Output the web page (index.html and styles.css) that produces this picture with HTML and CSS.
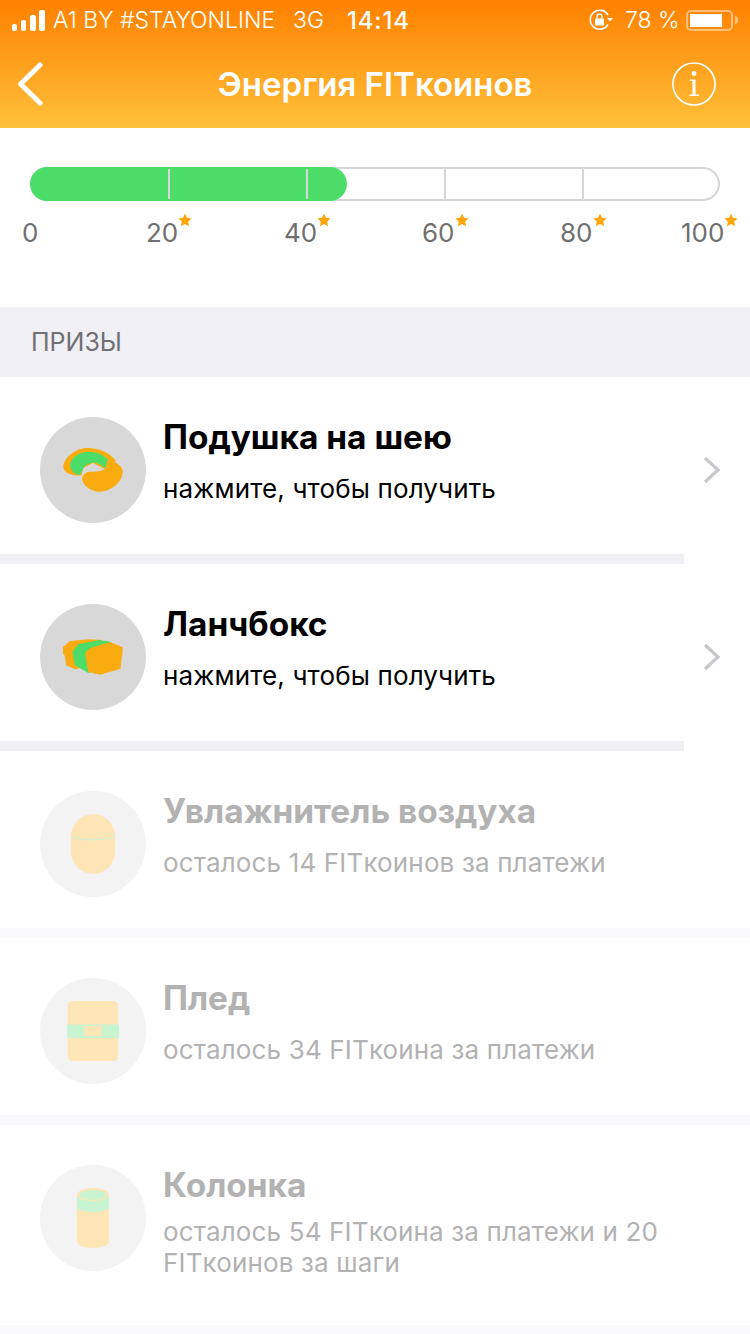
FILE: index.html
```html
<!DOCTYPE html>
<html lang="ru">
<head>
  <meta charset="UTF-8" />
  <meta name="viewport" content="width=device-width, initial-scale=1.0" />
  <title>Энергия FITкоинов</title>
  <link rel="stylesheet" href="styles.css">
</head>
<body>
  <header class="top">
    <div class="status">
      <svg class="signal" width="34" height="21" viewBox="0 0 34 21">
        <rect x="0" y="14" width="5" height="7" rx="2"/>
        <rect x="9" y="10" width="5" height="11" rx="2"/>
        <rect x="18" y="5" width="6" height="16" rx="2"/>
        <rect x="27" y="0" width="6" height="21" rx="2"/>
      </svg>
      <span class="carrier">A1 BY #STAYONLINE</span>
      <span class="net">3G</span>
      <span class="time">14:14</span>
      <span class="status-right">
        <svg class="lock" width="24" height="22" viewBox="0 0 24 22">
          <path d="M19 15.5A9.5 9.5 0 1 1 19 6" fill="none" stroke="#fff" stroke-width="1.6"/>
          <path d="M18 9h6l-3 3.5z" fill="#fff"/>
          <rect x="6" y="9.5" width="9" height="7" rx="1" fill="#fff"/>
          <path d="M8 9.5V7.5a2.5 2.5 0 0 1 5 0v2" fill="none" stroke="#fff" stroke-width="1.4"/>
        </svg>
        <span class="percent">78 %</span>
        <span class="battery"><span class="battery-level"></span></span>
        <span class="battery-nub"></span>
      </span>
    </div>
    <div class="nav">
      <svg class="back" width="28" height="44" viewBox="0 0 28 44">
        <path d="M24 3L4.5 22L24 41" fill="none" stroke="#fff" stroke-width="5" stroke-linecap="round" stroke-linejoin="round"/>
      </svg>
      <h1>Энергия FITкоинов</h1>
      <svg class="info" width="44" height="44" viewBox="0 0 44 44">
        <circle cx="22" cy="22" r="21" fill="none" stroke="#fff" stroke-width="1.7"/>
        <circle cx="22" cy="11.5" r="2.4" fill="#fff"/>
        <path d="M18 17.5h5.5v15H27v1.5H17.5v-1.5h3V19H18z" fill="#fff"/>
      </svg>
    </div>
  </header>

  <section class="progress">
    <div class="track">
      <div class="fill" style="width: 317px"></div>
      <div class="cell"></div>
      <div class="cell"></div>
      <div class="cell"></div>
      <div class="cell"></div>
      <div class="cell"></div>
    </div>
    <div class="scale">
      <span class="mark">0</span>
      <span class="mark">20<svg class="star" width="14" height="14" viewBox="0 0 24 24"><path d="M12 1l3.4 7.3 7.9 1-5.8 5.4 1.5 7.9-7-3.9-7 3.9 1.5-7.9L.7 9.3l7.9-1z"/></svg></span>
      <span class="mark">40<svg class="star" width="14" height="14" viewBox="0 0 24 24"><path d="M12 1l3.4 7.3 7.9 1-5.8 5.4 1.5 7.9-7-3.9-7 3.9 1.5-7.9L.7 9.3l7.9-1z"/></svg></span>
      <span class="mark">60<svg class="star" width="14" height="14" viewBox="0 0 24 24"><path d="M12 1l3.4 7.3 7.9 1-5.8 5.4 1.5 7.9-7-3.9-7 3.9 1.5-7.9L.7 9.3l7.9-1z"/></svg></span>
      <span class="mark">80<svg class="star" width="14" height="14" viewBox="0 0 24 24"><path d="M12 1l3.4 7.3 7.9 1-5.8 5.4 1.5 7.9-7-3.9-7 3.9 1.5-7.9L.7 9.3l7.9-1z"/></svg></span>
      <span class="mark">100<svg class="star" width="14" height="14" viewBox="0 0 24 24"><path d="M12 1l3.4 7.3 7.9 1-5.8 5.4 1.5 7.9-7-3.9-7 3.9 1.5-7.9L.7 9.3l7.9-1z"/></svg></span>
    </div>
  </section>

  <div class="section-title">ПРИЗЫ</div>

  <div class="prize">
    <svg class="pic" width="106" height="106" viewBox="0 0 106 106">
      <circle cx="53" cy="53" r="53" fill="#d8d8d8"/>
      <path d="M23.3 50C24 40 36 31 47 31C60 31 70 36 76 44L65 52L53 46L43 51L41.7 58C36 60 24 57 23.3 50Z" fill="#faab10"/>
      <path d="M30 48C31 40 40 34.7 48.3 34.7C57 34.7 64 38 68.5 43L65 51.5C61 47 57 45.5 53.3 45.7C48 46 44 49 43 52L40 58C35 57.5 30 53 30 48Z" fill="#4cdd69"/>
      <path d="M68 42C78 46 83 50 82.7 55C82 66 70 74.7 60 74.7C50 74.7 43 68 42 62C42 58 46 54.7 50 54.7C56 55 62 54 65 52Z" fill="#faab10"/>
    </svg>
    <div class="prize-text">
      <div class="prize-name">Подушка на шею</div>
      <div class="prize-note">нажмите, чтобы получить</div>
    </div>
    <svg class="more" width="18" height="28" viewBox="0 0 18 28"><path d="M2 2l13 12L2 26" fill="none" stroke="#c7c7cc" stroke-width="3.2"/></svg>
  </div>
  <div class="line"></div>

  <div class="prize">
    <svg class="pic" width="106" height="106" viewBox="0 0 106 106">
      <circle cx="53" cy="53" r="53" fill="#d8d8d8"/>
      <path d="M23 43L30 37L50 35.3L62 36L60 60L35 65.3L26 61.3L25 52L23 50Z" fill="#faab10"/>
      <path d="M32.3 48L38.3 40.3L58.3 36.3L69.3 37.3L70 60L48.3 69L35 61.3Z" fill="#4cdd69"/>
      <path d="M45 49.7C47 46 50 44 53.3 43L70 38L82.7 43L82.5 50L81.5 54L80.7 64.7L60 70.7L48.3 68Z" fill="#faab10"/>
    </svg>
    <div class="prize-text">
      <div class="prize-name">Ланчбокс</div>
      <div class="prize-note">нажмите, чтобы получить</div>
    </div>
    <svg class="more" width="18" height="28" viewBox="0 0 18 28"><path d="M2 2l13 12L2 26" fill="none" stroke="#c7c7cc" stroke-width="3.2"/></svg>
  </div>
  <div class="line"></div>

  <div class="prize locked">
    <svg class="pic" width="106" height="106" viewBox="0 0 106 106">
      <circle cx="53" cy="53" r="53" fill="#d8d8d8"/>
      <rect x="31" y="23" width="44" height="60" rx="22" fill="#faab10"/>
      <path d="M31 45.5C40 50 66 50 75 45.5" fill="none" stroke="#4cdd69" stroke-width="1"/>
    </svg>
    <div class="prize-text">
      <div class="prize-name">Увлажнитель воздуха</div>
      <div class="prize-note">осталось 14 FITкоинов за платежи</div>
    </div>
  </div>
  <div class="line wide"></div>

  <div class="prize locked">
    <svg class="pic" width="106" height="106" viewBox="0 0 106 106">
      <circle cx="53" cy="53" r="53" fill="#d8d8d8"/>
      <path d="M30.7 23H75L78 26V80L75 83H30.7L27.7 80V26Z" fill="#faab10"/>
      <rect x="27" y="46.5" width="52" height="13.5" rx="1" fill="#4cdd69"/>
      <rect x="44" y="48" width="18" height="10" rx="1" fill="#faab10"/>
    </svg>
    <div class="prize-text">
      <div class="prize-name">Плед</div>
      <div class="prize-note">осталось 34 FITкоина за платежи</div>
    </div>
  </div>
  <div class="line wide"></div>

  <div class="prize locked tall">
    <svg class="pic" width="106" height="106" viewBox="0 0 106 106">
      <circle cx="53" cy="53" r="53" fill="#d8d8d8"/>
      <path d="M37 30C37 26 44 23 53 23C62 23 69 26 69 30V77C69 80 62 83 53 83C44 83 37 80 37 77Z" fill="#faab10"/>
      <path d="M37 31C40 35 47 36 53 36C59 36 66 35 69 31V43C66 46 59 47 53 47C47 47 40 46 37 43Z" fill="#4cdd69"/>
      <ellipse cx="53" cy="30" rx="13.5" ry="4.8" fill="#4cdd69"/>
    </svg>
    <div class="prize-text">
      <div class="prize-name">Колонка</div>
      <div class="prize-note">осталось 54 FITкоина за платежи и 20 FITкоинов за шаги</div>
    </div>
  </div>
  <div class="line wide"></div>
</body>
</html>
```

FILE: styles.css
```css
html, body {
  margin: 0;
  padding: 0;
}
body {
  font-family: Inter, "Noto Sans", sans-serif;
  background: #fff;
  color: #000;
  width: 750px;
  height: 1334px;
  overflow: hidden;
}
.top {
  height: 128px;
  background: linear-gradient(#ff8000, #ffc03a);
  color: #fff;
}
.status {
  display: flex;
  align-items: center;
  height: 40px;
  padding-left: 12px;
  font-size: 23px;
  font-weight: 300;
}
.signal {
  fill: #fff;
  margin-right: 7px;
}
.carrier {
  width: 240px;
  white-space: nowrap;
}
.net {
  width: 54px;
}
.time {
  font-size: 24px;
  font-weight: 500;
  letter-spacing: 0.8px;
  width: 242px;
}
.status-right {
  display: flex;
  align-items: center;
}
.percent {
  margin-left: 12px;
  width: 61px;
  white-space: nowrap;
}
.battery {
  width: 47px;
  height: 21px;
  box-sizing: border-box;
  border: 2px solid rgba(255, 255, 255, 0.45);
  border-radius: 5px;
  padding: 2px;
}
.battery-level {
  display: block;
  width: 32px;
  height: 100%;
  background: #fff;
}
.battery-nub {
  width: 3px;
  height: 8px;
  margin-left: 2px;
  background: rgba(255, 255, 255, 0.45);
  border-radius: 0 3px 3px 0;
}
.nav {
  display: grid;
  grid-template-columns: 1fr auto 1fr;
  align-items: center;
  height: 88px;
  padding: 0 34px 0 16px;
}
.nav h1 {
  margin: 0 0 0 18px;
  font-size: 33px;
  font-weight: 600;
}
.info {
  justify-self: end;
}
.progress {
  height: 179px;
  box-sizing: border-box;
  padding-top: 39px;
}
.track {
  position: relative;
  display: grid;
  grid-template-columns: repeat(5, 138px);
  width: 690px;
  height: 34px;
  margin-left: 30px;
  box-sizing: border-box;
  border: 2px solid #d6d6d6;
  border-radius: 17px;
}
.fill {
  position: absolute;
  left: -2px;
  top: -2px;
  bottom: -2px;
  background: #4cdd69;
  border-radius: 17px;
}
.cell {
  position: relative;
  border-right: 2px solid #d6d6d6;
}
.cell:last-child {
  border-right: none;
}
.scale {
  display: grid;
  grid-template-columns: 124px 138px 138px 138px 121px auto;
  padding-left: 22px;
  margin-top: 14px;
  font-size: 26px;
  color: #6f6f6f;
}
.mark {
  display: flex;
  align-items: flex-start;
  line-height: 36px;
}
.star {
  fill: #ffa50a;
  margin-top: -2px;
}
.section-title {
  height: 70px;
  line-height: 70px;
  padding-left: 31px;
  background: #efeff4;
  color: #6f6f74;
  font-size: 25px;
}
.prize {
  display: flex;
  align-items: flex-start;
  height: 177px;
  box-sizing: border-box;
  padding: 40px 29px 0 40px;
}
.prize.tall {
  height: 200px;
}
.pic {
  flex: none;
  margin-right: 17px;
}
.prize-text {
  flex: 1;
}
.prize-name {
  font-size: 33.4px;
  font-weight: 700;
  line-height: 40px;
  margin-bottom: 16px;
}
.tall .prize-name {
  margin-bottom: 11px;
}
.prize-note {
  font-size: 26px;
  letter-spacing: 0.15px;
  line-height: 31px;
}
.more {
  margin-top: 39px;
}
.locked .pic {
  opacity: 0.3;
}
.locked .prize-name,
.locked .prize-note {
  color: #b2b2b2;
}
.line {
  height: 10px;
  width: 684px;
  background: #efeff4;
}
.line.wide {
  width: 750px;
  background: #f9f9fb;
}
```
